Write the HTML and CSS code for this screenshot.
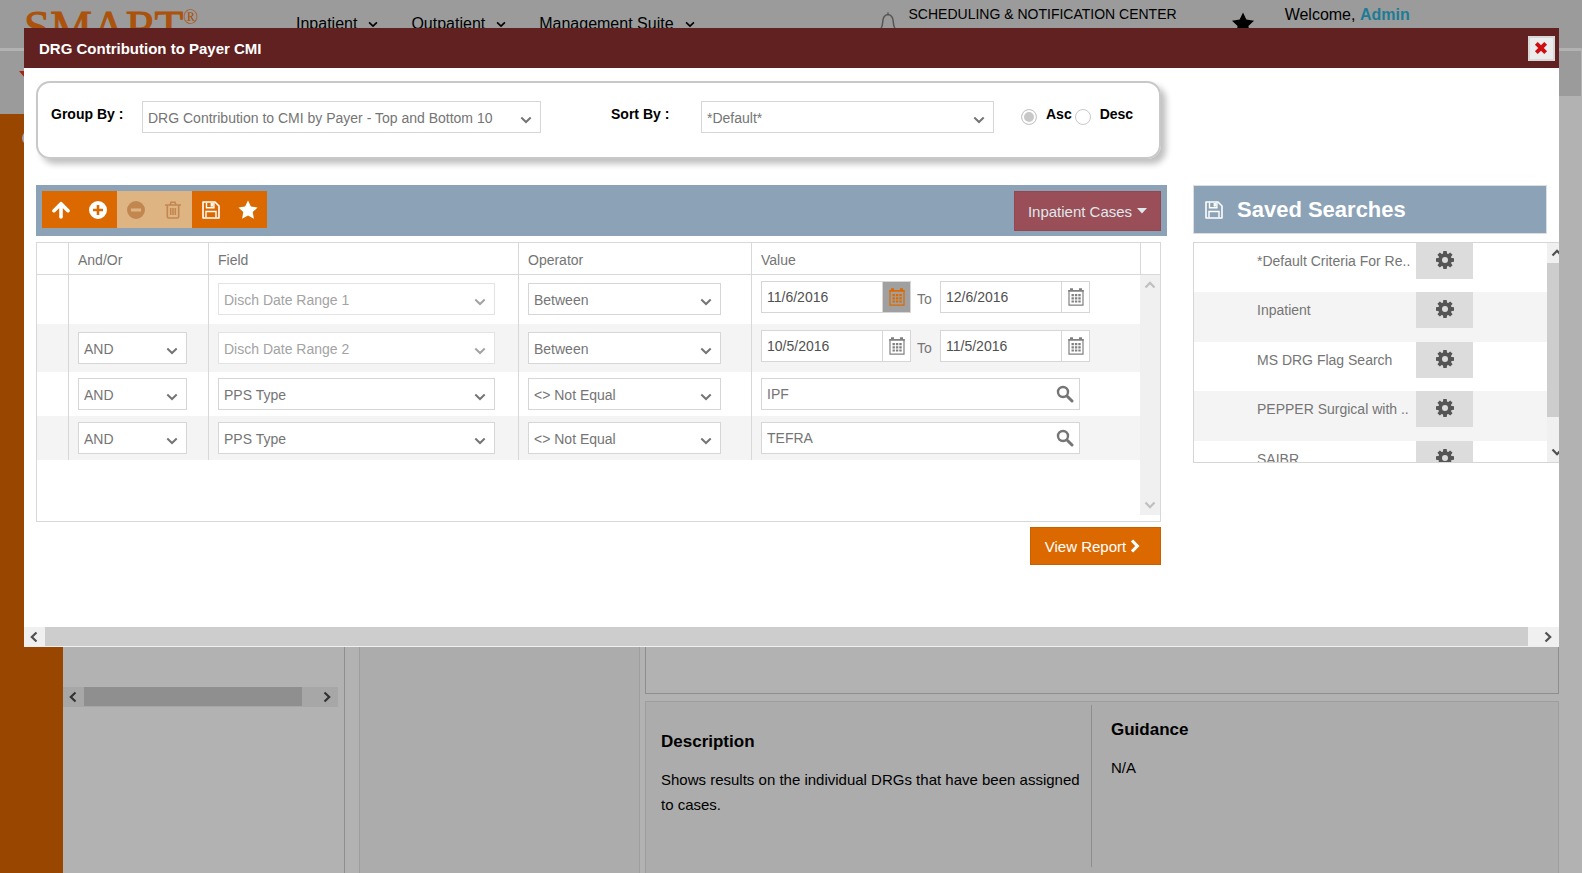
FILE: index.html
```html
<!DOCTYPE html>
<html lang="en">
<head>
<meta charset="utf-8">
<title>DRG Contribution to Payer CMI</title>
<link rel="stylesheet" href="styles.css">
</head>
<body>
<svg class="sprite" aria-hidden="true">
  <symbol id="chev" viewBox="0 0 12 8"><path d="M1.3 1.5 6 6 10.7 1.5" fill="none" stroke="currentColor" stroke-width="2"/></symbol>
  <symbol id="arrow" viewBox="0 0 12 12"><path d="M8.5 1.5 3.8 6l4.7 4.5" fill="none" stroke="currentColor" stroke-width="2.2"/></symbol>
  <symbol id="cal" viewBox="0 0 16 18"><path d="M1 2.500h14v14.700H1z" fill="none" stroke="currentColor" stroke-width="1.200"/><path d="M.3 2h15.400v1.700H.3zM2 .3h3v2H2zM11 .3h3v2h-3z" fill="currentColor"/><path d="M3.500 6h2.400v2.200H3.500zM6.900 6h2.400v2.200H6.900zM10.300 6h2.400v2.200h-2.400zM3.500 9.200h2.400v2.200H3.500zM6.900 9.200h2.400v2.200H6.900zM10.300 9.200h2.400v2.200h-2.400zM3.500 12.400h2.400v2.200H3.500zM6.900 12.400h2.400v2.200H6.900zM10.300 12.400h2.400v2.200h-2.400z" fill="currentColor"/></symbol>
  <symbol id="mag" viewBox="0 0 18 18"><circle cx="7" cy="7" r="5" fill="none" stroke="currentColor" stroke-width="2.400"/><path d="m11.500 11.500 4.500 4.500" stroke="currentColor" stroke-width="3" stroke-linecap="round"/></symbol>
  <symbol id="disk" viewBox="0 0 18 18"><path d="M1 1h12l4 4v12H1z" fill="none" stroke="currentColor" stroke-width="1.600" stroke-linejoin="round"/><path d="M4.500 1.500v5.300h7.400V1.500M4 16.500v-6h10v6" fill="none" stroke="currentColor" stroke-width="1.400"/><path d="M8.600 2h2.300v3.600H8.600z" fill="currentColor"/></symbol>
  <symbol id="star" viewBox="0 0 20 20"><path d="m10 .5 2.900 6.100 6.700.9-4.900 4.600 1.200 6.700L10 15.600l-5.900 3.200 1.200-6.700L.4 7.500l6.700-.9z" fill="currentColor"/></symbol>
  <symbol id="gear" viewBox="0 0 18 18"><g fill="currentColor"><path id="tooth" d="M7.300 0h3.400l.5 4H6.800zM7.300 18h3.400l.5-4H6.800z"/><use href="#tooth" transform="rotate(45 9 9)"/><use href="#tooth" transform="rotate(90 9 9)"/><use href="#tooth" transform="rotate(135 9 9)"/></g><circle cx="9" cy="9" r="4.900" fill="none" stroke="currentColor" stroke-width="3.800"/></symbol>
</svg>

<div class="page">
  <header class="top">
    <div class="logo">SMART<span>®</span></div>
    <nav class="menu">
      <a href="#">Inpatient <svg><use href="#chev"/></svg></a>
      <a href="#">Outpatient <svg><use href="#chev"/></svg></a>
      <a href="#">Management Suite <svg><use href="#chev"/></svg></a>
    </nav>
    <a class="notify" href="#"><svg viewBox="0 0 20 22"><path d="M2 17.500c2.500-2 2.500-5 2.800-8.500C5.100 5.500 6.800 3 10 2.500c3.200.5 4.900 3 5.200 6.500.3 3.500.3 6.500 2.800 8.500zM10 2.500V.5" fill="none" stroke="currentColor" stroke-width="1.500"/></svg>SCHEDULING &amp; NOTIFICATION CENTER</a>
    <a class="fav" href="#" aria-label="Favorites"><svg><use href="#star"/></svg></a>
    <div class="welcome">Welcome, <a href="#">Admin</a></div>
  </header>
  <div class="subbar">
    <div class="sub-left"><svg viewBox="0 0 12 8"><path d="M0 0h12L6 7z" fill="#a5280c"/></svg></div>
    <div class="sub-right"></div>
  </div>
  <main class="work">
    <aside class="rail"><svg viewBox="0 0 14 14"><circle cx="7" cy="7" r="6" fill="none" stroke="#a9a3b5" stroke-width="2"/></svg></aside>
    <section class="tree">
      <div class="tree-body"></div>
      <div class="hbar dim"><svg><use href="#arrow"/></svg><i></i><svg class="flip"><use href="#arrow"/></svg></div>
    </section>
    <section class="reports"></section>
    <div class="detail">
      <section class="preview"></section>
      <section class="about">
        <div class="desc"><h2>Description</h2><p>Shows results on the individual DRGs that have been assigned to cases.</p></div>
        <div class="guide"><h2>Guidance</h2><p>N/A</p></div>
      </section>
    </div>
  </main>
</div>

<div class="dialog" role="dialog" aria-labelledby="dlg-title">
  <div class="titlebar">
    <h1 id="dlg-title">DRG Contribution to Payer CMI</h1>
    <button class="close" type="button" aria-label="Close"><svg viewBox="0 0 12 12"><path d="m2 2 8 8M10 2l-8 8" stroke="#cf0e12" stroke-width="3.400"/></svg></button>
  </div>
  <div class="content">
    <form class="sorting">
      <label class="lab" for="group">Group By :</label>
      <span class="sel w-group"><select id="group"><option>DRG Contribution to CMI by Payer - Top and Bottom 10</option></select><svg><use href="#chev"/></svg></span>
      <label class="lab second" for="sort">Sort By :</label>
      <span class="sel w-sort"><select id="sort"><option>*Default*</option></select><svg><use href="#chev"/></svg></span>
      <div class="order">
        <input type="radio" name="order" id="asc" checked disabled><label for="asc">Asc</label>
        <input type="radio" name="order" id="desc" disabled><label for="desc">Desc</label>
      </div>
    </form>

    <div class="criteria">
      <div class="toolbar">
        <div class="tools">
          <button type="button" aria-label="Move up"><svg viewBox="0 0 18 18"><path d="M9 16V3.500M2 9.700l7-7 7 7" fill="none" stroke="currentColor" stroke-width="3.600" stroke-linecap="round" stroke-linejoin="round"/></svg></button>
          <button type="button" aria-label="Add"><svg viewBox="0 0 18 18"><path fill-rule="evenodd" d="M9 0a9 9 0 1 0 0 18A9 9 0 0 0 9 0zM7.700 4h2.600v3.700H14v2.600h-3.700V14H7.700v-3.700H4V7.700h3.700z" fill="currentColor"/></svg></button>
          <button type="button" aria-label="Remove" disabled><svg viewBox="0 0 18 18"><path fill-rule="evenodd" d="M9 0a9 9 0 1 0 0 18A9 9 0 0 0 9 0zM4 7.500h10v3H4z" fill="currentColor"/></svg></button>
          <button type="button" aria-label="Delete" disabled><svg viewBox="0 0 18 18"><path d="M1 4h16M6 4l1-2.800h4L12 4M3.300 4v11.500q0 1.500 1.500 1.500h8.400q1.500 0 1.500-1.500V4M6.700 7v7M9 7v7M11.300 7v7" fill="none" stroke="currentColor" stroke-width="1.600"/></svg></button>
          <button type="button" aria-label="Save"><svg><use href="#disk"/></svg></button>
          <button type="button" aria-label="Favorite"><svg class="big"><use href="#star"/></svg></button>
        </div>
        <button class="cases" type="button">Inpatient Cases <svg viewBox="0 0 10 6"><path d="M0 0h10L5 5.500z" fill="currentColor"/></svg></button>
      </div>

      <div class="grid">
        <table>
          <colgroup><col class="c-mark"><col class="c-and"><col class="c-field"><col class="c-op"><col></colgroup>
          <thead><tr><th></th><th>And/Or</th><th>Field</th><th>Operator</th><th>Value</th></tr></thead>
          <tbody>
            <tr class="tall">
              <td></td><td></td>
              <td><span class="sel"><select disabled aria-label="Field 1"><option>Disch Date Range 1</option></select><svg><use href="#chev"/></svg></span></td>
              <td><span class="sel"><select aria-label="Operator 1"><option>Between</option></select><svg><use href="#chev"/></svg></span></td>
              <td><div class="range">
                <span class="date"><input type="text" value="11/6/2016" aria-label="From date 1"><button class="active" type="button" aria-label="Calendar"><svg><use href="#cal"/></svg></button></span><span class="to">To</span><span class="date"><input type="text" value="12/6/2016" aria-label="To date 1"><button type="button" aria-label="Calendar"><svg><use href="#cal"/></svg></button></span></div></td>
            </tr>
            <tr class="tall">
              <td></td>
              <td><span class="sel"><select aria-label="And/Or 2"><option>AND</option></select><svg><use href="#chev"/></svg></span></td>
              <td><span class="sel"><select disabled aria-label="Field 2"><option>Disch Date Range 2</option></select><svg><use href="#chev"/></svg></span></td>
              <td><span class="sel"><select aria-label="Operator 2"><option>Between</option></select><svg><use href="#chev"/></svg></span></td>
              <td><div class="range">
                <span class="date"><input type="text" value="10/5/2016" aria-label="From date 2"><button type="button" aria-label="Calendar"><svg><use href="#cal"/></svg></button></span><span class="to">To</span><span class="date"><input type="text" value="11/5/2016" aria-label="To date 2"><button type="button" aria-label="Calendar"><svg><use href="#cal"/></svg></button></span></div></td>
            </tr>
            <tr>
              <td></td>
              <td><span class="sel"><select aria-label="And/Or 3"><option>AND</option></select><svg><use href="#chev"/></svg></span></td>
              <td><span class="sel"><select aria-label="Field 3"><option>PPS Type</option></select><svg><use href="#chev"/></svg></span></td>
              <td><span class="sel"><select aria-label="Operator 3"><option>&lt;&gt; Not Equal</option></select><svg><use href="#chev"/></svg></span></td>
              <td><span class="lookup"><input type="text" value="IPF" aria-label="Value 3"><button type="button" aria-label="Look up"><svg><use href="#mag"/></svg></button></span></td>
            </tr>
            <tr>
              <td></td>
              <td><span class="sel"><select aria-label="And/Or 4"><option>AND</option></select><svg><use href="#chev"/></svg></span></td>
              <td><span class="sel"><select aria-label="Field 4"><option>PPS Type</option></select><svg><use href="#chev"/></svg></span></td>
              <td><span class="sel"><select aria-label="Operator 4"><option>&lt;&gt; Not Equal</option></select><svg><use href="#chev"/></svg></span></td>
              <td><span class="lookup"><input type="text" value="TEFRA" aria-label="Value 4"><button type="button" aria-label="Look up"><svg><use href="#mag"/></svg></button></span></td>
            </tr>
          </tbody>
        </table>
        <div class="side"><div class="side-head"></div><div class="vbar faint"><svg class="up"><use href="#arrow"/></svg><svg class="down"><use href="#arrow"/></svg></div></div>
      </div>
      <button class="view" type="button">View Report <svg viewBox="0 0 10 14"><path d="m2 1.500 5.300 5.500L2 12.500" fill="none" stroke="currentColor" stroke-width="3.200"/></svg></button>
    </div>

    <aside class="saved">
      <h2><svg><use href="#disk"/></svg>Saved Searches</h2>
      <div class="saved-box">
        <ul>
          <li><a href="#">*Default Criteria For Re..</a><button type="button" aria-label="Options"><svg><use href="#gear"/></svg></button></li>
          <li><a href="#">Inpatient</a><button type="button" aria-label="Options"><svg><use href="#gear"/></svg></button></li>
          <li><a href="#">MS DRG Flag Search</a><button type="button" aria-label="Options"><svg><use href="#gear"/></svg></button></li>
          <li><a href="#">PEPPER Surgical with ..</a><button type="button" aria-label="Options"><svg><use href="#gear"/></svg></button></li>
          <li><a href="#">SAIBR</a><button type="button" aria-label="Options"><svg><use href="#gear"/></svg></button></li>
        </ul>
        <div class="vbar"><svg class="up"><use href="#arrow"/></svg><i></i><svg class="down"><use href="#arrow"/></svg></div>
      </div>
    </aside>
  </div>
  <div class="hbar wide"><svg><use href="#arrow"/></svg><i></i><svg class="flip"><use href="#arrow"/></svg></div>
</div>
</body>
</html>
```

FILE: styles.css
```css
* { box-sizing: border-box; }
body {
  margin: 0;
  background: #b2b2b2;
  font-family: "Liberation Sans", Arial, sans-serif;
  font-size: 14px;
  color: #000;
}
a { color: inherit; text-decoration: none; }
button, input, select { font: inherit; color: inherit; margin: 0; }
button { border: 0; padding: 0; background: none; display: flex; align-items: center; justify-content: center; }
h1, h2, p, ul { margin: 0; padding: 0; }
svg { display: block; flex: none; }
.sprite { position: absolute; width: 0; height: 0; }

/* Page behind the dialog */
.page { display: flex; flex-direction: column; height: 100vh; min-height: 800px; overflow: hidden; }
.top {
  display: flex;
  align-items: flex-start;
  height: 51px;
  padding-left: 24px;
  background: #9b9b9b;
  border-bottom: 3px solid #b2b2b2;
  white-space: nowrap;
  flex: none;
}
.logo {
  display: flex;
  width: 272px;
  color: #ab520c;
  font: 47px/54px "Liberation Serif", serif;
  -webkit-text-stroke: 1px #ab520c;
}
.logo span { font-size: 20px; line-height: 34px; -webkit-text-stroke: 0; }
.menu { display: flex; gap: 33px; font-size: 16px; line-height: 18px; padding-top: 15px; }
.menu a { display: flex; align-items: center; gap: 11px; }
.menu svg { width: 10px; height: 7px; }
.notify { display: flex; gap: 11px; margin-left: 183px; padding-top: 6px; line-height: 16px; }
.notify svg { width: 20px; height: 22px; margin-top: 6px; color: #555; }
.fav { margin-left: 54px; padding-top: 12px; }
.fav svg { width: 24px; height: 23px; }
.welcome { font-size: 16px; line-height: 18px; padding-top: 6px; margin-left: 30px; }
.welcome a { color: #1d7b96; font-weight: bold; }
.subbar { display: flex; justify-content: space-between; height: 63px; flex: none; }
.sub-left { width: 63px; background: #9b9b9b; padding: 20px 0 0 19px; }
.sub-left svg { width: 12px; height: 8px; }
.sub-right { width: 63px; height: 45px; margin-right: 1px; background: #9b9b9b; }
.work { display: flex; flex: 1; min-height: 0; }
.rail { width: 63px; background: #994700; padding: 17px 0 0 22px; }
.rail svg { width: 14px; height: 14px; }
.tree { display: flex; flex-direction: column; width: 282px; padding: 0 6px 166px 0; border-right: 1px solid #8e8e8e; }
.tree-body { flex: 1; }
.reports { width: 281px; margin: 0 5px 0 14px; background: #acacac; border: solid #9e9e9e; border-width: 0 1px; }
.detail { display: grid; grid-template-rows: 1fr 172px; gap: 7px; flex: 1; margin-right: 23px; }
.preview { border: 1px solid #8e8e8e; }
.about {
  display: grid;
  grid-template-columns: 445px 1fr;
  padding-bottom: 6px;
  background: #acacac;
  border: solid #9e9e9e;
  border-width: 1px 1px 0;
}
.about h2 { font-size: 17px; line-height: 20px; }
.about p { font-size: 15px; line-height: 25px; padding-top: 15px; }
.desc { padding: 30px 8px 0 15px; }
.guide { margin-top: 3px; padding: 15px 19px 0; border-left: 1px solid #8e8e8e; }

/* Scroll bars */
.hbar { display: flex; align-items: center; height: 20px; background: #f0f0f0; color: #505050; }
.hbar svg { width: 12px; height: 12px; margin: 0 5px 0 4px; }
.hbar i { flex: 1; align-self: flex-start; height: 19px; background: #cdcdcd; }
.hbar .flip { transform: scaleX(-1); margin: 0 5px 0 14px; }
.dim { background: #a7a7a7; color: #333; }
.dim i { background: #8f8f8f; }
.dim .flip { margin-left: 19px; }
.vbar { display: flex; flex-direction: column; align-items: center; justify-content: space-between; width: 20px; background: #f0f0f0; color: #505050; }
.vbar svg { width: 12px; height: 12px; margin: 4px 0; }
.vbar i { flex: 1; width: 20px; background: #cdcdcd; margin-bottom: 25px; }
.vbar .up { transform: rotate(90deg); }
.vbar .down { transform: rotate(-90deg); }
.faint { color: #bfbfbf; }

/* Dialog */
.dialog { position: absolute; top: 28px; left: 24px; right: 23px; background: #fff; overflow: hidden; }
.titlebar { display: flex; align-items: center; justify-content: space-between; height: 40px; padding: 0 4px 0 15px; background: #602120; color: #fff; }
.titlebar h1 { font-size: 15px; line-height: 18px; padding-top: 2px; }
.close { width: 27px; height: 25px; padding-right: 2px; background: #ececec; border: 2px solid #d8d8d8; }
.close svg { width: 14px; height: 14px; }
.content {
  display: grid;
  grid-template-columns: minmax(0, 1fr) 354px;
  gap: 26px;
  padding: 13px 12px 62px;
}
.sorting {
  grid-area: 1 / 1;
  display: flex;
  align-items: flex-start;
  margin-right: 6px;
  padding: 18px 13px 24px;
  border: 2px solid #c8c8c8;
  border-radius: 14px;
  box-shadow: 5px 5px 6px #c0c0c0;
  font-weight: bold;
}
.lab { width: 91px; line-height: 16px; padding-top: 5px; }
.second { width: 90px; margin-left: 70px; }
.order { display: flex; align-items: flex-start; margin-left: 27px; line-height: 16px; }
.order input { appearance: none; width: 16px; height: 16px; margin-top: 8px; border: 1px solid #c8c8c8; border-radius: 50%; background: #fff; }
.order input:checked { background: #c8c8c8; box-shadow: inset 0 0 0 2px #fff; }
.order label { padding: 5px 3px 0 9px; }

.sel { display: block; position: relative; height: 32px; font-weight: normal; color: #757575; }
.sel select {
  appearance: none;
  width: 100%;
  height: 32px;
  padding: 2px 24px 0 5px;
  border: 1px solid #d6d6d6;
  border-radius: 0;
  background: #fff;
}
.sel svg { position: absolute; right: 9px; top: 15px; width: 12px; height: 8px; pointer-events: none; }
.sel select:disabled { color: #a3a3a3; border-color: #e3e3e3; opacity: 1; }
.sel select:disabled + svg { color: #a3a3a3; }
.w-group { width: 399px; }
.w-sort { width: 293px; }

.criteria { grid-area: 2 / 1; }
.toolbar { display: flex; align-items: flex-start; justify-content: space-between; padding: 6px 6px 5px; background: #8ca2b7; }
.tools { display: flex; width: 225px; height: 37px; }
.tools button { flex: 1; background: #dc6900; color: #fff; }
.tools button:disabled { background: #deb582; color: #c28750; }
.tools svg { width: 18px; height: 18px; }
.tools .big { width: 20px; height: 20px; }
.cases { gap: 5px; width: 147px; height: 40px; background: #9a4e57; border: 1px solid #954650; color: #dfe8ec; font-size: 15px; }
.cases svg { width: 10px; height: 6px; }

.grid { display: flex; margin: 6px 6px 5px 0; padding-bottom: 6px; border: 1px solid #d8d8d8; color: #757575; }
table { flex: 1; align-self: flex-start; width: 100%; table-layout: fixed; border-collapse: separate; border-spacing: 0; }
.c-mark { width: 32px; }
.c-and { width: 140px; }
.c-field { width: 310px; }
.c-op { width: 233px; }
th { height: 32px; padding: 2px 9px 0; border: solid #d8d8d8; border-width: 0 1px 1px 0; text-align: left; font-weight: normal; }
td { height: 44px; padding: 6px 0 0 9px; border-right: 1px solid #d8d8d8; vertical-align: top; }
th:last-child, td:last-child { border-right: 0; }
.tall td { height: 49px; padding-top: 8px; }
.tall td:last-child { padding-top: 6px; }
.tall + .tall td { height: 48px; }
tbody tr:nth-child(even) { background: #f4f4f4; }
td:nth-child(2) .sel { width: 109px; }
td:nth-child(3) .sel { width: 277px; }
td:nth-child(4) .sel { width: 193px; }
.range { display: flex; gap: 6px; }
.to { width: 17px; padding-top: 10px; line-height: 16px; }
.date, .lookup { display: flex; height: 32px; border: 1px solid #d6d6d6; background: #fff; }
.date { width: 150px; color: #505050; }
.lookup { width: 319px; }
.date input, .lookup input { flex: 1; min-width: 0; padding: 0 5px; border: 0; background: transparent; }
.date button { width: 28px; border-left: 1px solid #d6d6d6; color: #808080; }
.date svg { width: 16px; height: 18px; }
.date .active { background: #a0a0a0; color: #dc6900; }
.lookup button { width: 28px; }
.lookup svg { width: 18px; height: 18px; }
.side { display: flex; flex-direction: column; flex: none; width: 20px; }
.side-head { height: 32px; border: solid #d8d8d8; border-width: 0 0 1px 1px; }
.side .vbar { height: 240px; }
.view { gap: 4px; width: 131px; height: 38px; margin: 0 6px 0 auto; padding-right: 6px; background: #dc6900; border: 1px solid #c96000; color: #fff; font-size: 15px; }
.view svg { width: 10px; height: 14px; }

.saved { grid-area: 2 / 2; }
.saved h2 { display: flex; align-items: center; gap: 14px; height: 49px; padding-left: 11px; background: #8ca2b7; border: 1px solid #dcdfe2; color: #fff; font-size: 22px; }
.saved h2 svg { width: 18px; height: 20px; }
.saved-box { display: flex; height: 221px; margin: 8px -12px 0 0; border: solid #d6d6d6; border-width: 1px 0 1px 1px; overflow: hidden; }
.saved-box ul { flex: none; width: 353px; list-style: none; color: #757575; }
.saved-box .vbar { flex: none; }
.saved-box li { display: flex; align-items: flex-start; height: 49px; padding-left: 63px; }
.saved-box li:nth-child(even) { height: 50px; background: #f4f4f4; }
.saved-box li a { width: 159px; padding-top: 10px; line-height: 17px; overflow: hidden; white-space: nowrap; }
.saved-box li button { width: 57px; height: 36px; padding-bottom: 2px; background: #dcdcdc; color: #555; }
.saved-box li svg { width: 18px; height: 18px; }
```
